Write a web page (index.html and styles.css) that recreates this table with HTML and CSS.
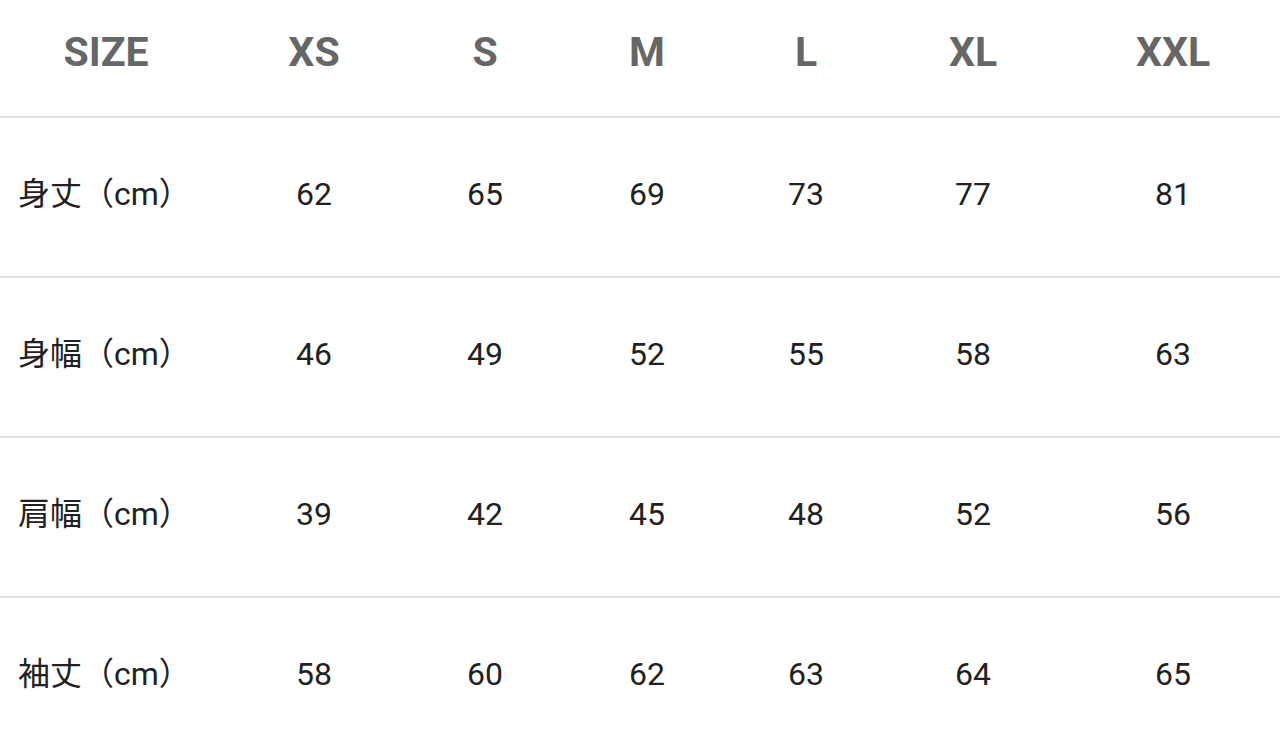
FILE: index.html
```html
<!DOCTYPE html>
<html lang="ja">
<head>
<meta charset="utf-8">
<title>Size chart</title>
<link rel="stylesheet" href="styles.css">
</head>
<body>
<div class="table">
  <div class="row head">
    <div class="cell">SIZE</div>
    <div class="cell">XS</div>
    <div class="cell">S</div>
    <div class="cell">M</div>
    <div class="cell">L</div>
    <div class="cell">XL</div>
    <div class="cell">XXL</div>
  </div>
  <div class="row">
    <div class="cell label">身丈（cm）</div>
    <div class="cell">62</div>
    <div class="cell">65</div>
    <div class="cell">69</div>
    <div class="cell">73</div>
    <div class="cell">77</div>
    <div class="cell">81</div>
  </div>
  <div class="row">
    <div class="cell label">身幅（cm）</div>
    <div class="cell">46</div>
    <div class="cell">49</div>
    <div class="cell">52</div>
    <div class="cell">55</div>
    <div class="cell">58</div>
    <div class="cell">63</div>
  </div>
  <div class="row">
    <div class="cell label">肩幅（cm）</div>
    <div class="cell">39</div>
    <div class="cell">42</div>
    <div class="cell">45</div>
    <div class="cell">48</div>
    <div class="cell">52</div>
    <div class="cell">56</div>
  </div>
  <div class="row last">
    <div class="cell label">袖丈（cm）</div>
    <div class="cell">58</div>
    <div class="cell">60</div>
    <div class="cell">62</div>
    <div class="cell">63</div>
    <div class="cell">64</div>
    <div class="cell">65</div>
  </div>
</div>
</body>
</html>
```

FILE: styles.css
```css
html, body {
  margin: 0;
  padding: 0;
  background: #ffffff;
}

body {
  font-family: "Roboto", "Noto Sans CJK JP", sans-serif;
  color: #212121;
  overflow: hidden;
}

.table {
  width: 1280px;
  display: flex;
  flex-direction: column;
}

.row {
  display: grid;
  grid-template-columns: 212px 204px 138px 186px 132px 202px 198px;
  height: 158px;
  border-bottom: 2px solid #e0e0e0;
  box-sizing: content-box;
  font-size: 32px;
  align-items: center;
}

.row .cell {
  text-align: center;
  line-height: 38px;
  padding-bottom: 7px;
}

.row.head {
  height: 116px;
  font-size: 41px;
  font-weight: 700;
  color: #666666;
}

.row.head .cell {
  line-height: 48px;
  padding-bottom: 13px;
}

.row .cell.label {
  text-align: left;
  padding-left: 18px;
  white-space: nowrap;
}

.row.last {
  border-bottom: none;
}
```
